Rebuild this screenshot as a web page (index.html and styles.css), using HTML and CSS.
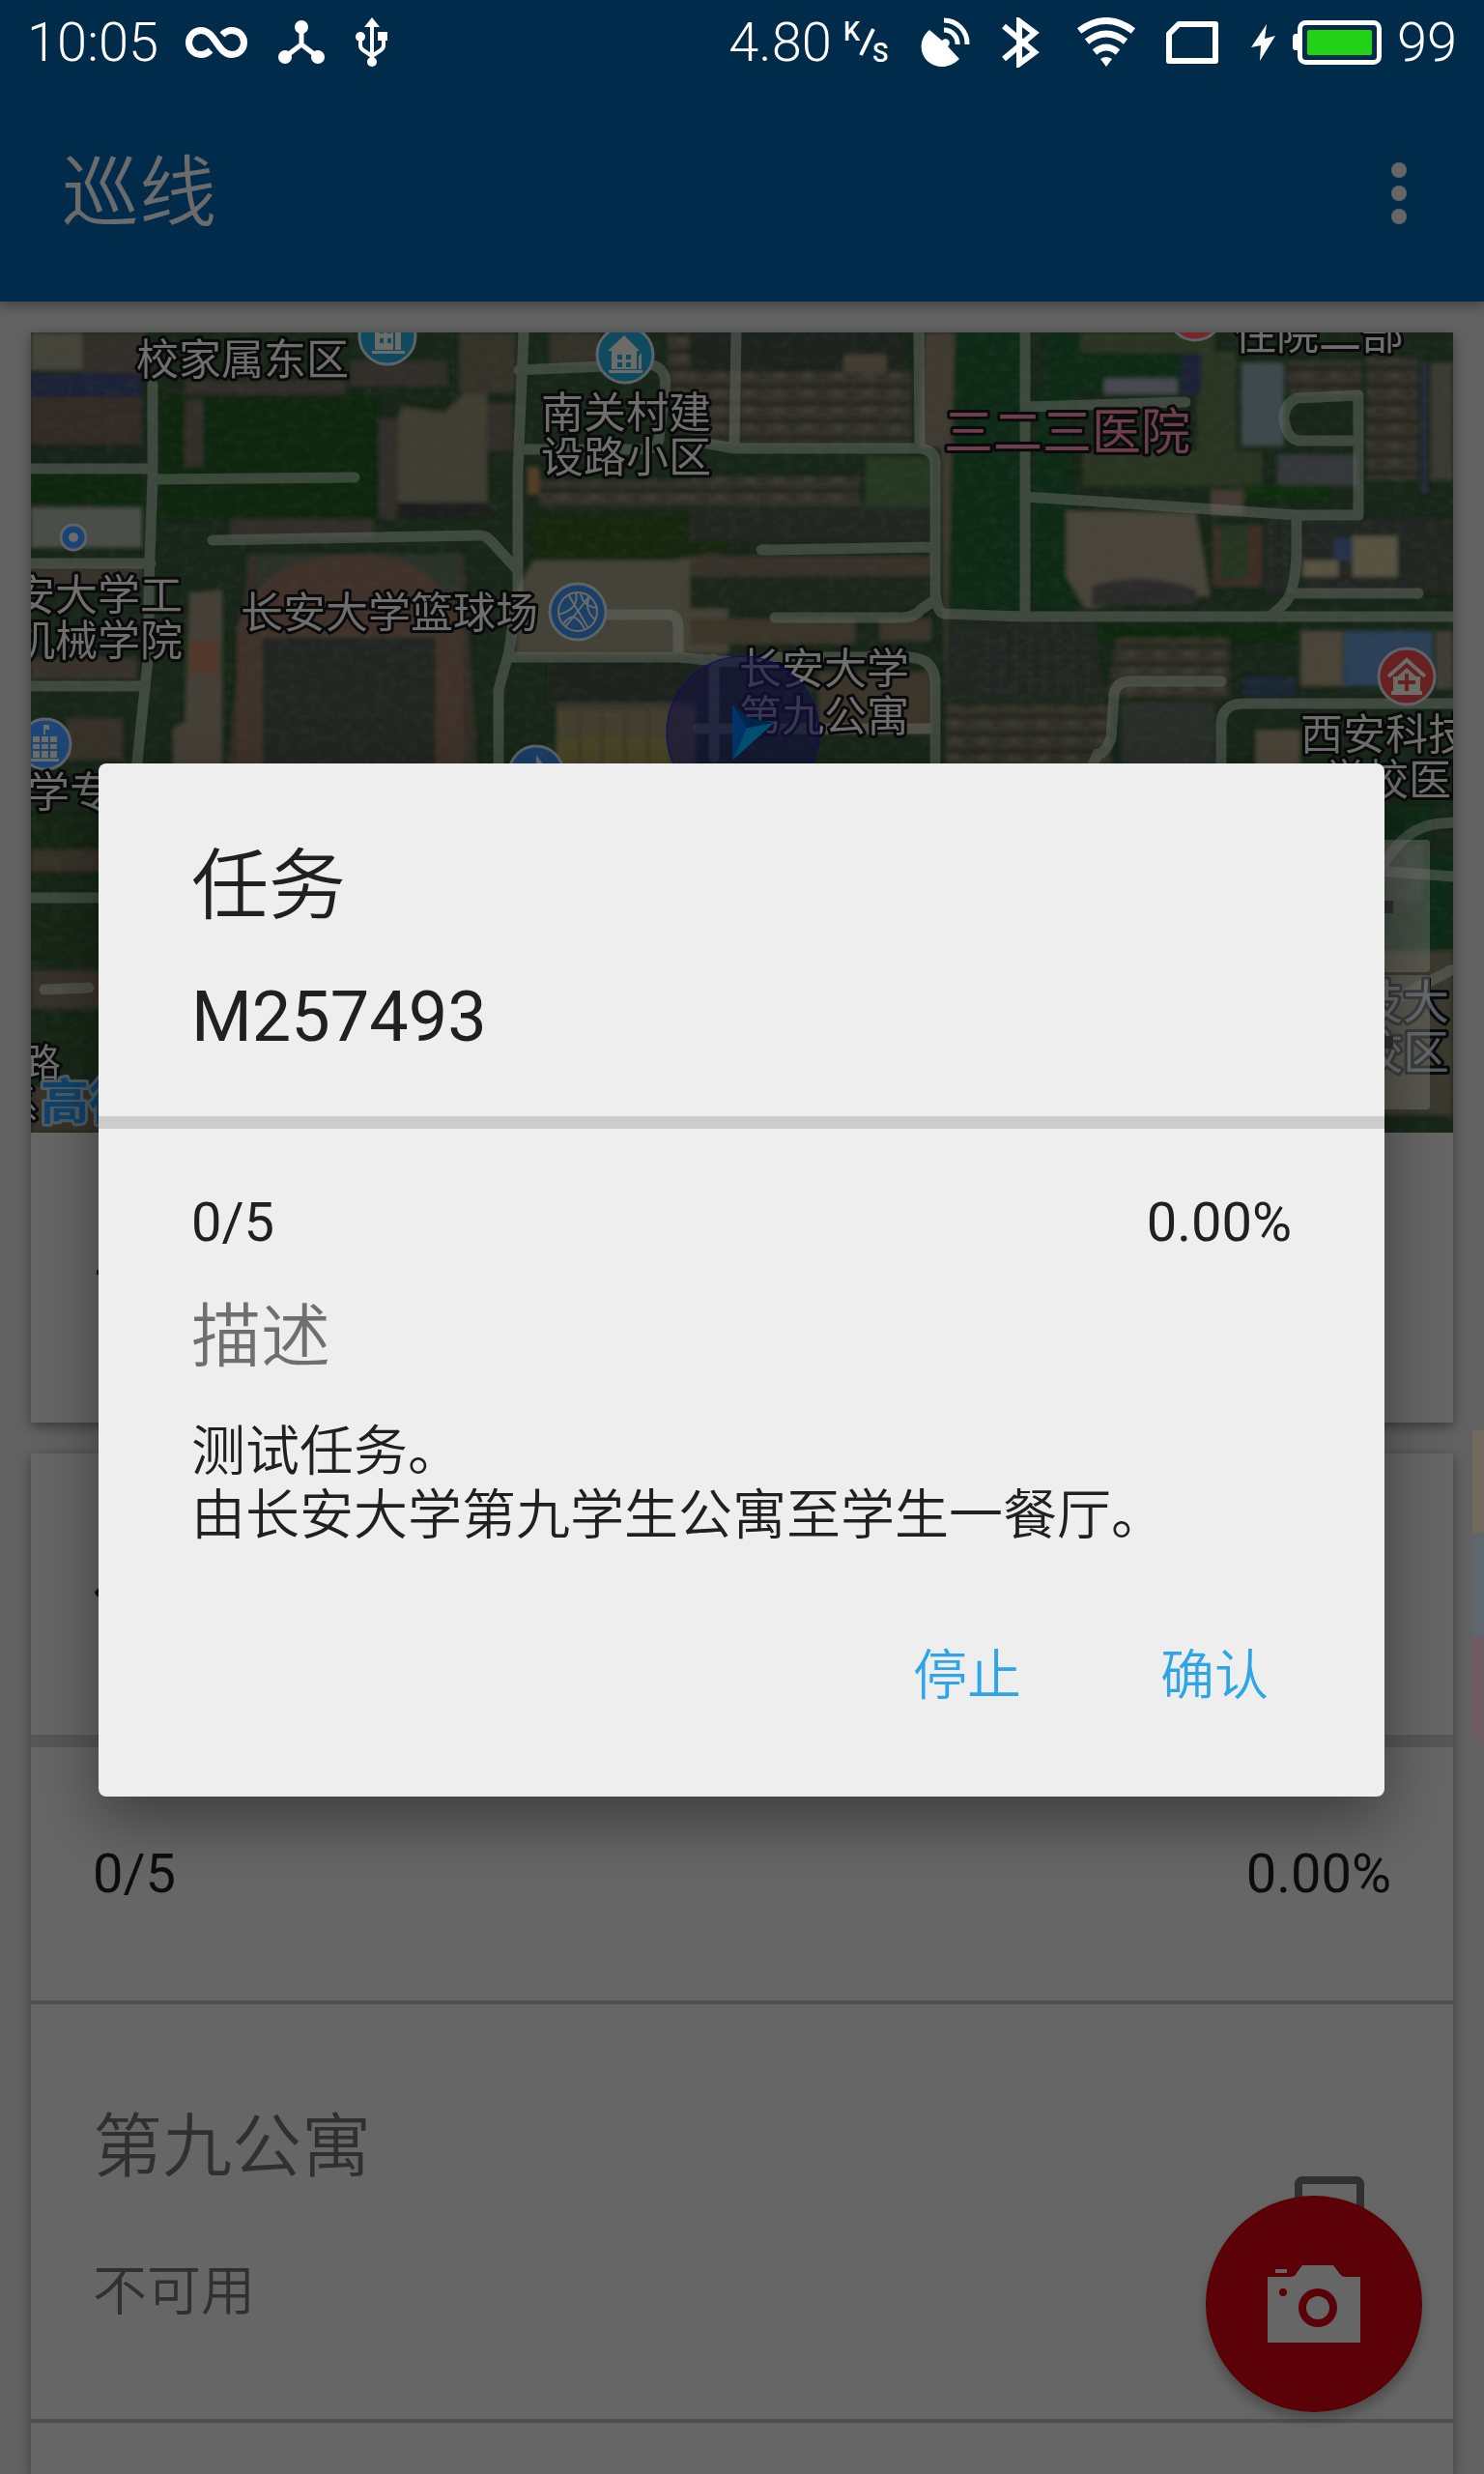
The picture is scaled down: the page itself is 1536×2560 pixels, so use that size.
FILE: index.html
```html
<!DOCTYPE html>
<html lang="zh-CN">
<head>
<meta charset="utf-8">
<meta name="viewport" content="width=device-width">
<title>巡线</title>
<link rel="stylesheet" href="styles.css">
</head>
<body>
<header class="top">
  <div class="status">
    <div class="status-side">
      <div class="status-pair clock">
        <span>10:05</span>
        <svg width="64" height="32" viewBox="0 0 64 32" fill="none" stroke="#fff" stroke-width="7"><path d="M26 24C23 27 20 28.500 16 28.500C9 28.500 3.500 23 3.500 16S9 3.500 16 3.500C31 3.500 33 28.500 48 28.500C55 28.500 60.500 23 60.500 16S55 3.500 48 3.500C44 3.500 41 5 38 8"/></svg>
      </div>
      <svg width="48" height="46" viewBox="0 0 48 46" fill="#fff"><path d="M24 8V25M24 25L7 38M24 25L41 38" stroke="#fff" stroke-width="5"/><circle cx="24" cy="7" r="7"/><circle cx="7" cy="38" r="7"/><circle cx="41" cy="38" r="7"/></svg>
      <svg width="34" height="52" viewBox="0 0 34 52" fill="#fff"><path d="M17 6V46M5 20V29Q5 32 8 34L17 40L26 34Q29 32 29 29V20" fill="none" stroke="#fff" stroke-width="4"/><path d="M17 0L25 10H9ZM23 15H33V24H23Z"/><circle cx="5" cy="20" r="5"/><circle cx="17" cy="46" r="5"/></svg>
    </div>
    <div class="status-side">
      <div class="status-pair rate">
        <span>4.80</span>
        <svg width="48" height="46" viewBox="0 0 48 46" fill="#fff"><text x="0" y="21" class="unit">K</text><text x="30" y="43" class="unit">S</text><path d="M18 36L31 9" stroke="#fff" stroke-width="4"/></svg>
      </div>
      <svg width="52" height="52" viewBox="0 0 52 52" fill="#fff"><path d="M9 13L22 24C27 19 33 26 28 30L40 43C31 52 18 54 8 46C-2 38-2 22 9 13Z"/><path d="M24 3A24 24 0 0 1 48 28M24 13A14 14 0 0 1 38 28" fill="none" stroke="#fff" stroke-width="5"/></svg>
      <svg width="46" height="52" viewBox="0 0 46 52" fill="none" stroke="#fff" stroke-width="6"><path d="M2 9L34 36L18 48V4L34 16L2 43"/></svg>
      <svg width="60" height="52" viewBox="0 0 60 52" fill="none" stroke="#fff" stroke-width="7"><path d="M2 14Q30-7 58 14M10 25Q30 9 50 25M18 36Q30 26 42 36"/><path d="M24 43Q30 39 36 43L30 51Z" fill="#fff" stroke="none"/></svg>
      <svg width="54" height="44" viewBox="0 0 54 44" fill="none" stroke="#fff" stroke-width="6" stroke-linejoin="round"><path d="M3 13L13 3H51V41H3Z"/></svg>
      <div class="status-pair">
        <svg width="28" height="38" viewBox="0 0 28 38" fill="#fff"><path d="M18 0L2 24L12 22L11 38L27 12L16 15Z"/></svg>
        <svg width="93" height="46" viewBox="0 0 93 46" fill="none"><rect x="8.500" y="2.500" width="82" height="41" rx="6" stroke="#fff" stroke-width="5"/><path d="M8 14H4Q1 14 1 18V28Q1 31 4 31H8Z" fill="#fff"/><rect x="16" y="10" width="67" height="26" rx="2" fill="#22d216"/></svg>
        <span>99</span>
      </div>
    </div>
  </div>
  <div class="appbar">
    <h1 class="app-title">巡线</h1>
    <button class="more" aria-label="更多"><svg width="16" height="64" viewBox="0 0 16 64" fill="#666"><circle cx="8" cy="8" r="8"/><circle cx="8" cy="32" r="8"/><circle cx="8" cy="56" r="8"/></svg></button>
  </div>
</header>

<main class="content">
  <section class="card">
    <svg class="map" viewBox="0 0 1472 828" preserveAspectRatio="xMidYMid slice">
      <defs>
        <filter id="soft"><feGaussianBlur stdDeviation="2"/></filter>
        <filter id="grain" x="0" y="0" width="100%" height="100%" color-interpolation-filters="sRGB"><feTurbulence type="fractalNoise" baseFrequency=".09 .12" numOctaves="4" seed="8"/><feColorMatrix values="0 0 0 0 .3  0 0 0 0 .32  0 0 0 0 .27  1.600 0 0 0 -.6"/></filter>
        <pattern id="roofs" width="62" height="54" patternUnits="userSpaceOnUse"><rect width="62" height="54" fill="#343229"/><rect y="38" width="62" height="16" fill="#20261f"/><rect x="4" y="6" width="22" height="14" fill="#403e34"/><rect x="38" y="12" width="14" height="14" fill="#2d2e28"/></pattern>
        <pattern id="dense" width="30" height="26" patternUnits="userSpaceOnUse"><rect width="30" height="26" fill="#212624"/><rect x="3" y="4" width="12" height="11" fill="#2a2d2b"/><rect x="20" y="8" width="7" height="12" fill="#1b201d"/></pattern>
      </defs>
      <rect width="1472" height="828" fill="#172619"/>
      <g filter="url(#soft)">
        <g transform="translate(-32 -14) scale(.4898 .3333)">
          <path d="M65 42H175V160H65Z" fill="#44443a"/>
          <path d="M175 42H310V170H175ZM390 190H730V235H390Z" fill="#302e29"/>
          <path d="M65 170H300V240H65Z" fill="#1d2338"/>
          <path d="M65 242H300V390H65Z" fill="#302b28"/>
          <path d="M65 390H305V450H65Z" fill="#18211a"/>
          <path d="M335 240H800V620H335ZM65 485H305V580H65Z" fill="#10280f"/>
          <path d="M65 585H300V710H65Z" fill="#4b4d4a"/>
          <path d="M65 770H300V830H65ZM65 1050H290V1120H65ZM140 1240H260V1370H140Z" fill="#37322c"/>
          <path d="M740 130H945V210H740ZM390 250H430V460H390ZM800 310H840V620H800ZM485 620H790V680H485ZM1030 260H1085V410H1030Z" fill="#322e29"/>
          <path d="M850 270L940 290L980 230H1030V560L1050 590H840V310Z" fill="#403e32"/>
          <path d="M840 570H1040V610H840Z" fill="#1a1d1a"/>
          <path d="M970 42H1090V230H970ZM1160 42H1270V140H1160Z" fill="#343229"/>
          <path d="M1410 42H1540V240H1410ZM1140 500H1510V590H1140Z" fill="url(#roofs)"/>
          <path d="M1115 460H1140V545H1115Z" fill="#563d28"/>
          <path d="M525 730H980L1010 1410H480Z" fill="#302e28"/>
          <path d="M545 730H970V850H545Z" fill="#2b302a"/>
          <path d="M500 1410V960C530 800 630 730 750 730S940 800 980 980V1410Z" fill="#3f3229"/>
          <path d="M555 990H920V1410H555Z" fill="#202820"/>
          <path d="M400 850L470 840V1410H365V1270L390 1250Z" fill="#454139"/>
          <path d="M400 1000H460V1100H400Z" fill="#52392c"/>
          <path d="M1140 720L1430 710L1540 740V1040H1090V840Z" fill="#454339"/>
          <path d="M1120 600H1540V720L1420 750H1130Z" fill="#142611"/>
          <path d="M1160 1065H1500V1190H1160Z" fill="#1a231c"/>
          <path d="M1175 1190H1470V1215H1175Z" fill="#3a352e"/>
          <path d="M1175 1215H1470V1410H1175Z" fill="#45412f"/>
          <path d="M1175 1300H1420V1410H1175Z" fill="#4a4426"/>
          <path d="M1225 1215V1410M1272 1215V1410M1322 1215V1410M1370 1215V1410M1415 1215V1410" stroke="#302e25" stroke-width="4"/>
        </g>
        <g transform="translate(736 -14) scale(.4898 .3333)">
          <path d="M-110 42H350V170H-110Z" fill="#1a211b"/>
          <path d="M215 110H305V190H215Z" fill="#423d32"/>
          <path d="M-110 165H360V390H-110ZM-110 490H250V585H-110Z" fill="url(#roofs)"/>
          <path d="M260 430H400V585H260Z" fill="#263821"/>
          <path d="M-110 585H400V690H-110Z" fill="#242824"/>
          <path d="M-110 735H400V800H-110Z" fill="#38332b"/>
          <path d="M-110 800H400V900H-110Z" fill="#1a251b"/>
          <path d="M-110 930H240V1010H-110ZM290 930H400V1000H290Z" fill="#3b342c"/>
          <path d="M385 42H450L430 1180L420 400H375Z" fill="#403b30"/>
          <path d="M450 42H590V900H440ZM640 42H950V230H640ZM615 230H700V900H615Z" fill="#0f2b12"/>
          <path d="M715 42H1000V105H715ZM720 410H1100V520H720ZM960 100H1045V420H960Z" fill="#2c3522"/>
          <path d="M765 185H920V235H765Z" fill="#4a4a53"/>
          <path d="M930 110H970V235H930Z" fill="#1f2137"/>
          <path d="M1055 135H1145V395H1055Z" fill="#3c4a4e"/>
          <path d="M1150 130H1310V235H1150ZM1320 120H1430V500H1320Z" fill="url(#roofs)"/>
          <path d="M1455 135H1503V500H1455Z" fill="#3b3a30"/>
          <path d="M1436 130H1448V540H1436Z" fill="#292c43"/>
          <path d="M1130 420H1300V520H1130Z" fill="#34393a"/>
          <path d="M1060 515H1240V565H1060Z" fill="#0d2e0c"/>
          <path d="M990 530H1060V610H990Z" fill="#463a35"/>
          <path d="M685 595L960 600L990 860L725 900L685 800Z" fill="#48443b"/>
          <path d="M740 830Q840 780 960 840V890H740Z" fill="#292b29"/>
          <path d="M995 640H1100V830H995Z" fill="#3d2f26"/>
          <path d="M1010 640H1070V810H1010Z" fill="#273524"/>
          <path d="M1105 620H1160V850H1105Z" fill="url(#dense)"/>
          <path d="M1180 620H1503V850H1180Z" fill="#222722"/>
          <path d="M1185 750H1260V800H1185ZM1290 675H1385V800H1290Z" fill="#585342"/>
          <path d="M1250 680H1290V750H1250Z" fill="#27304b"/>
          <path d="M440 940H740L770 1190H430Z" fill="#202524"/>
          <path d="M510 970H740V1160H510Z" fill="url(#dense)"/>
          <path d="M760 940H1170V1000H760Z" fill="#11270f"/>
          <path d="M790 990H1030V1180H770ZM430 1200H780V1410H430Z" fill="url(#roofs)"/>
          <path d="M1180 968H1270V1140H1180ZM1085 1275H1180V1410H1085Z" fill="#4b4538"/>
          <path d="M1272 968H1460V1140H1272Z" fill="#2a4059"/>
          <path d="M1465 968H1503V1150H1465Z" fill="#403c35"/>
          <path d="M1060 1110H1170V1170H1060Z" fill="#20294b" opacity=".6"/>
          <path d="M160 1095H400V1290H160Z" fill="#3a362b"/>
          <path d="M800 1190H1000V1410H800Z" fill="#292d29"/>
        </g>
        <path d="M0 535H80V558H0ZM0 660H80V700H0ZM0 780H80V828H0Z" fill="#37312a"/>
        <path d="M0 500H80V535H0ZM0 565H80V655H0ZM20 705H80V780H20Z" fill="#122713"/>
        <path d="M1395 490H1450V530H1395ZM1440 540H1472V640H1440Z" fill="#112a12"/>
        <path d="M1395 530H1440V590H1395Z" fill="#253026"/>
        <path d="M1395 640H1472V810H1395Z" fill="#3a372e"/>
      </g>
      <rect width="1472" height="828" filter="url(#grain)" opacity=".22"/>
      <path class="road" d="M126 54V150L122 260V330L110 444V470M0 141H126M126 152L335 150M0 239H124M0 366H118M188 215L465 210Q472 210 480 220L502 244M510 0L504 145V265L495 330L484 370V460M505 39L640 33Q660 36 656 60L650 110Q648 121 635 121H505M730 0L728 120M598 292H662Q670 294 670 305V336M495 336H670L690 338L768 344V336H910Q934 338 936 360V460M707 338V440M694 115H700L728 120H920Q936 122 936 135V270Q938 290 945 291L1028 294H1472M920 120L919 0M756 225L936 222M770 295H900Q915 295 922 286L936 277M1029 0V294M1029 77L1195 72M1029 170L1180 180L1310 189H1374M1374 65L1310 68Q1296 75 1297 90Q1300 110 1312 112H1374M1374 65V189M1310 189V230Q1308 270 1298 280L1284 293M1310 270L1436 270M1232 361H1140Q1123 360 1121 375L1118 420Q1112 436 1104 436L1098 450V470M1472 384H1255Q1233 384 1232 405V470M690 410H936M0 585H80M14 680L60 678M1395 560Q1420 510 1460 508L1472 507M1395 557L1472 563M1395 700Q1430 680 1470 660"/>
      <g class="pins">
        <g transform="translate(369 4)"><circle r="29" fill="#0f4a5e"/><path d="M-13-18H6V14H-13ZM8-4L14-8V14H8ZM-16 15H18V18H-16Z" fill="#6b6b68"/><path d="M-8-8H-4V-3H-8ZM0-8H4V-3H0ZM-8 2H-4V7H-8ZM0 2H4V7H0Z" fill="#0f4a5e"/></g>
        <g transform="translate(615 23)"><circle r="29" fill="#0f4a5e"/><path d="M-18-4L-1-20L15-4H12V15H-14V-4ZM14 2L17-2V15H14ZM-17 16H18V19H-17Z" fill="#6b6b68"/><path d="M-8 0H-3V5H-8ZM1 0H6V5H1ZM-8 8H-3V13H-8ZM1 8H6V13H1Z" fill="#0f4a5e"/></g>
        <g transform="translate(44 212)"><circle r="13" fill="#1b4275"/><circle r="5" fill="#6b6b68"/></g>
        <g transform="translate(566 289)"><circle r="29" fill="#1c3f68"/><g fill="none" stroke="#6b6b68" stroke-width="2"><circle r="20"/><path d="M-10-18L11 17M12-16L-13 16M-2-20Q2-3-20 3M3-20Q4-6 20-4M-15 13Q-4-4 7 18M18 8Q6-2 12-15"/></g></g>
        <g transform="translate(15 426)"><circle r="26" fill="#1d4676"/><path d="M-13-8H12V14H-13ZM-15 15H14V18H-15ZM-2-20H4V-15H0V-10H-2Z" fill="#6b6b68"/><path d="M-13-1H12M-13 6H12M-5-8V14M4-8V14" stroke="#1d4676" stroke-width="2"/></g>
        <g transform="translate(523 456)"><circle r="28" fill="#1c3f68"/><path d="M0-19L8-8H0Z" fill="#6b6b68"/></g>
        <g transform="translate(1205-20)"><circle r="28" fill="#7a2528"/></g>
        <g transform="translate(1424 356)"><circle r="29" fill="#682021"/><path d="M-19 0L0-17L19 0M-12 0V17M12 0V17M-16 17H16" fill="none" stroke="#6b6b68" stroke-width="4"/><path d="M-12 2L0-9L12 2V17H-12Z" fill="#6b6b68"/><path d="M-2-3H2V4H9V8H2V15H-2V8H-9V4H-2Z" fill="#682021"/></g>
      </g>
      <g class="labels">
        <text x="109" y="44">校家属东区</text>
        <text x="528" y="99">南关村建</text><text x="528" y="145">设路小区</text>
        <text x="157" y="288" text-anchor="end">长安大学工</text><text x="157" y="335" text-anchor="end">机械学院</text>
        <text x="217" y="306">长安大学篮球场</text>
        <text x="1245" y="18">住院二部</text>
        <text x="945" y="121" class="hospital">三二三医院</text>
        <text x="733" y="364">长安大学</text><text x="733" y="413">第九公寓</text>
        <text x="1314" y="432">西安科技</text><text x="1338" y="479">学校医院</text>
        <text x="-4" y="492">学专</text><text x="31" y="770" text-anchor="end" class="small">路</text>
        <text x="8" y="814" text-anchor="end" class="small">系</text>
        <text x="1468" y="710" text-anchor="end" class="campus">科技大</text><text x="1468" y="762" text-anchor="end" class="campus">校区</text>
        <text x="10" y="814" class="brand">高德地图</text>
      </g>
      <g fill="#7a7c78" opacity=".45"><rect x="1330" y="525" width="118" height="137" rx="4"/><rect x="1330" y="665" width="118" height="139" rx="4"/></g>
      <path d="M1370 588H1410V601H1370ZM1370 728H1410V741H1370Z" fill="#30312f"/>
      <circle cx="737" cy="414" r="79" fill="#14113f" fill-opacity=".6" stroke="#0a0a72"/>
      <path d="M726 385L743 399L769 404L741 409L726 443Z" fill="#003468"/>
      <path d="M769 404L741 409L726 443Z" fill="#005071"/>
      <path d="M726 385L743 399L769 404L741 409Z" fill="#00264c"/>
    </svg>
    <div class="card-text">长安大学</div>
  </section>

  <section class="card list-card">
    <h2 class="card-text task-head">任务</h2>
    <div class="bar"></div>
    <div class="progress"><span>0/5</span><span>0.00%</span></div>
    <label class="place">
      <span class="place-text"><span class="place-name">第九公寓</span><span>不可用</span></span>
      <input class="tick" type="checkbox" disabled>
    </label>
  </section>
</main>

<div class="strips"><i class="strip gold"></i><i class="strip sky"></i><i class="strip rose"></i></div>

<button class="fab" aria-label="拍照">
  <svg width="96" height="80" viewBox="0 0 96 80"><path fill="#666" fill-rule="evenodd" d="M8 4H20V8H8ZM0 12H24Q28 12 30 8L36 0H68L74 8Q77 12 80 12H96V80H0ZM16 24A4 4 0 1 0 16 32A4 4 0 1 0 16 24ZM52 24A20 20 0 1 0 52 64A20 20 0 1 0 52 24ZM52 32A12 12 0 1 1 52 56A12 12 0 1 1 52 32Z"/></svg>
</button>

<div class="overlay">
  <section class="dialog" role="dialog" aria-labelledby="task-title">
    <div class="dialog-head">
      <h2 class="dialog-title" id="task-title">任务</h2>
      <p class="task-id">M257493</p>
    </div>
    <div class="dialog-bar"></div>
    <div class="dialog-body">
      <div class="dialog-progress"><span>0/5</span><span>0.00%</span></div>
      <h3 class="dialog-sub">描述</h3>
      <p class="dialog-desc">测试任务。<br>由长安大学第九学生公寓至学生一餐厅。</p>
      <div class="actions"><button class="action">停止</button><button class="action">确认</button></div>
    </div>
  </section>
</div>
</body>
</html>
```
FILE: styles.css
```css
* { box-sizing: border-box; margin: 0; padding: 0; }
html, body { height: 100%; }
body {
  display: flex;
  flex-direction: column;
  position: relative;
  overflow: hidden;
  background: #626262;
  color: #0d0d0d;
  font: 350 56px/66px Roboto, "Noto Sans CJK SC", sans-serif;
}
h1, h2, h3 { font-weight: 350; }
button { border: 0; background: none; font: inherit; color: inherit; cursor: pointer; }
svg { display: block; flex: none; }

.top { flex: none; background: #002b4a; box-shadow: 0 4px 12px rgba(0, 0, 0, .35); z-index: 1; }
.status { display: flex; justify-content: space-between; height: 88px; padding: 0 28px; color: #fff; }
.status-side { display: flex; align-items: center; gap: 32px; }
.status-pair { display: flex; align-items: center; gap: 16px; }
.clock { gap: 28px; }
.rate { gap: 12px; }
.unit { font: 500 27px Roboto, sans-serif; }
.appbar { display: flex; align-items: center; justify-content: space-between; height: 224px; padding: 0 80px 0 64px; color: #6b6b6b; }
.app-title { font-size: 80px; line-height: 94px; }
.more { padding: 0; }

.content { flex: 1; min-height: 0; display: flex; flex-direction: column; gap: 32px; padding: 32px 32px 0; }
.card { flex: none; background: #666; box-shadow: 0 4px 12px rgba(0, 0, 0, .4); }
.list-card { flex: 1; }
.map { width: 100%; height: 828px; background: #172619; }
.road { fill: none; stroke: #666c66; stroke-width: 11; stroke-linecap: round; stroke-linejoin: round; opacity: .5; }
.pins { stroke-width: 2; }
.pins > g > circle:first-child { stroke: #5c6468; stroke-width: 3; }
.labels { font: 400 44px "Noto Sans CJK SC", sans-serif; fill: #6e6e6e; stroke: #0a0a0a; stroke-width: 6px; stroke-linejoin: round; paint-order: stroke; }
.hospital { font-size: 51px; fill: #6b3f4e; }
.small { font-size: 40px; }
.campus { font-size: 48px; fill: #555c66; }
.brand { font-size: 50px; font-weight: 700; fill: #10436a; stroke: #4d5d63; }
.card-text { height: 300px; padding: 108px 64px; font-size: 72px; line-height: 84px; }
.task-head { height: 291px; }
.bar { height: 13px; background: #575757; }
.progress { display: flex; justify-content: space-between; padding: 98px 64px; border-bottom: 4px solid #4e4e4e; font-weight: 400; }
.place { display: flex; align-items: center; justify-content: space-between; padding: 106px 92px 99px 64px; border-bottom: 4px solid #4e4e4e; color: #303030; }
.place-text { display: flex; flex-direction: column; gap: 74px; }
.place-name { font-size: 72px; line-height: 84px; }
.tick { appearance: none; width: 72px; height: 72px; margin-bottom: 8px; border: 8px solid #303030; border-radius: 8px; }

.strips { position: absolute; top: 1480px; right: 0; width: 12px; height: 319px; display: flex; flex-direction: column; }
.strip { flex: 1; }
.gold { background: #736a5c; }
.sky { background: #5c686e; }
.rose { background: #6f5c62; }

.fab { position: fixed; right: 64px; bottom: 64px; width: 224px; height: 224px; display: flex; align-items: center; justify-content: center; border-radius: 50%; background: #5b0006; box-shadow: 0 8px 12px rgba(0, 0, 0, .25); z-index: 2; }

.overlay { position: fixed; inset: 88px 0 0; display: flex; align-items: center; padding: 0 103px 0 102px; z-index: 3; }
.dialog { width: 100%; background: #eee; color: #202020; border-radius: 8px; box-shadow: 0 24px 64px rgba(0, 0, 0, .4); }
.dialog-head { padding: 80px 96px 60px; }
.dialog-title { margin-bottom: 47px; font-size: 80px; line-height: 94px; }
.task-id { font-size: 72px; line-height: 84px; font-weight: 400; }
.dialog-bar { height: 13px; background: #ccc; }
.dialog-body { padding: 64px 96px 92px; }
.dialog-progress { display: flex; justify-content: space-between; margin-bottom: 44px; font-weight: 400; }
.dialog-sub { margin-bottom: 43px; font-size: 72px; line-height: 84px; color: #6f6f6f; }
.dialog-desc { margin-bottom: 100px; }
.actions { display: flex; justify-content: flex-end; gap: 96px; }
.action { padding: 0 24px; color: #2fa5e9; }
```
